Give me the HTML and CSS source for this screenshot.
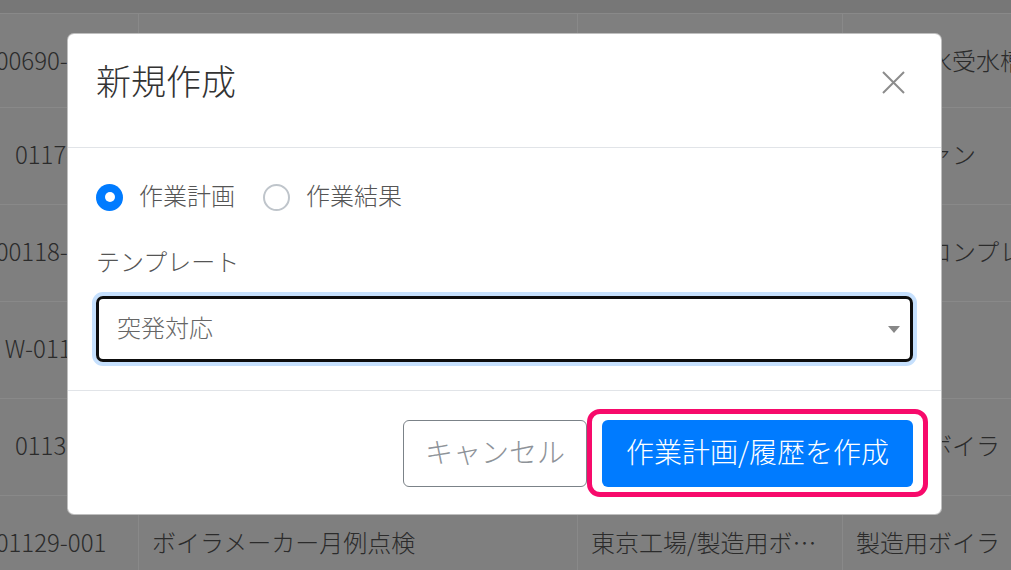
FILE: index.html
```html
<!DOCTYPE html>
<html lang="ja">
<head>
<meta charset="utf-8">
<title>新規作成</title>
<link rel="stylesheet" href="styles.css">
</head>
<body>
<div class="page">
  <div class="table">
    <div class="band"></div>
    <div class="row first">
      <div class="c id">00690-001</div>
      <div class="c">受水槽定期清掃</div>
      <div class="c">東京工場/受水槽</div>
      <div class="c">飲料用水受水槽</div>
    </div>
    <div class="row">
      <div class="c id">0117-0</div>
      <div class="c">冷却ファン点検</div>
      <div class="c">東京工場/空調設備</div>
      <div class="c">冷却ファン</div>
    </div>
    <div class="row">
      <div class="c id">00118-001</div>
      <div class="c">コンプレッサー点検</div>
      <div class="c">東京工場/空調設備</div>
      <div class="c">空調用コンプレッサー</div>
    </div>
    <div class="row">
      <div class="c id">W-01150</div>
      <div class="c">設備巡回点検</div>
      <div class="c">東京工場</div>
      <div class="c"></div>
    </div>
    <div class="row">
      <div class="c id">0113-0</div>
      <div class="c">ボイラ年次点検</div>
      <div class="c">東京工場/製造用ボイラ室</div>
      <div class="c">製造用ボイラ</div>
    </div>
    <div class="row">
      <div class="c id">01129-001</div>
      <div class="c">ボイラメーカー月例点検</div>
      <div class="c">東京工場/製造用ボイラ室</div>
      <div class="c">製造用ボイラ</div>
    </div>
  </div>

  <div class="modal" role="dialog" aria-labelledby="modal-title">
    <div class="modal-header">
      <h5 class="modal-title" id="modal-title">新規作成</h5>
      <button class="close" type="button" aria-label="閉じる">
        <svg width="23" height="23" viewBox="0 0 23 23" aria-hidden="true">
          <path d="M1 1 L22 22 M22 1 L1 22" stroke="#8c8c8c" stroke-width="2" fill="none"/>
        </svg>
      </button>
    </div>
    <div class="modal-body">
      <div class="radios">
        <label class="radio"><span class="dot checked"></span><span class="radio-label">作業計画</span></label>
        <label class="radio"><span class="dot"></span><span class="radio-label">作業結果</span></label>
      </div>
      <div class="field-label">テンプレート</div>
      <div class="select" role="combobox" aria-expanded="false">
        <span class="select-value">突発対応</span>
        <span class="caret"></span>
      </div>
    </div>
    <div class="modal-footer">
      <button class="btn btn-cancel" type="button">キャンセル</button>
      <div class="highlight">
        <button class="btn btn-primary" type="button">作業計画/履歴を作成</button>
      </div>
    </div>
  </div>
</div>
</body>
</html>
```

FILE: styles.css
```css
* {
  box-sizing: border-box;
}

html, body {
  margin: 0;
  padding: 0;
}

body {
  width: 1011px;
  height: 570px;
  overflow: hidden;
  background: #7f7f7f;
  font-family: "Noto Sans CJK JP", "Noto Sans", sans-serif;
  font-weight: 300;
}

.page {
  position: relative;
  width: 1011px;
  height: 570px;
  overflow: hidden;
}

/* background table (dimmed by backdrop) */
.table {
  display: flex;
  flex-direction: column;
  color: #2b2b2b;
  font-size: 24px;
}

.band {
  height: 13px;
  background: #777777;
}

.row {
  display: grid;
  grid-template-columns: 138px 439px 265px 1fr;
  height: 97px;
  border-top: 1px solid #898989;
}

.row.first {
  height: 94px;
}

.c {
  border-left: 1px solid #898989;
  padding: 0 13px;
  line-height: 91px;
  white-space: nowrap;
  overflow: hidden;
  text-overflow: ellipsis;
}

.c:last-child {
  text-overflow: clip;
  padding-right: 0;
}

.row.first .c {
  line-height: 92px;
}

.c.id {
  border-left: none;
  display: flex;
  justify-content: center;
  align-items: center;
  padding: 0 36px 5px 0;
  line-height: 36px;
  overflow: visible;
}

.row.first .c.id {
  line-height: 36px;
  padding-bottom: 2px;
}

/* modal */
.modal {
  position: absolute;
  left: 67px;
  top: 33px;
  width: 875px;
  background: #ffffff;
  border: 1px solid rgba(0, 0, 0, 0.25);
  border-radius: 7px;
}

.modal-header {
  display: flex;
  justify-content: space-between;
  align-items: flex-start;
  height: 114px;
  padding: 20px 28px 0;
  border-bottom: 1px solid #e1e4e8;
}

.modal-title {
  margin: 0;
  font-size: 35px;
  line-height: 52px;
  font-weight: 300;
  color: #333333;
}

.close {
  width: 40px;
  height: 52px;
  margin-top: 2px;
  padding: 0;
  border: none;
  background: transparent;
  display: flex;
  align-items: center;
  justify-content: center;
}

.modal-body {
  padding: 28px;
}

.radios {
  display: flex;
  align-items: center;
  height: 42px;
  gap: 28px;
}

.radio {
  display: flex;
  align-items: center;
  gap: 16px;
}

.dot {
  position: relative;
  width: 27px;
  height: 27px;
  border-radius: 50%;
  border: 2px solid #bfc5cb;
  background: #ffffff;
}

.dot.checked {
  border: none;
  background: #007bff;
}

.dot.checked::after {
  content: "";
  position: absolute;
  left: 8.5px;
  top: 8.5px;
  width: 10px;
  height: 10px;
  border-radius: 50%;
  background: #ffffff;
}

.radio-label {
  font-size: 24px;
  line-height: 36px;
  padding-bottom: 4px;
  color: #555555;
}

.field-label {
  margin-top: 25px;
  font-size: 24px;
  line-height: 36px;
  color: #555555;
}

.select {
  margin-top: 17px;
  height: 66px;
  display: flex;
  align-items: center;
  justify-content: space-between;
  padding: 0 10px 0 18px;
  border: 3px solid #0d0d0d;
  border-radius: 7px;
  box-shadow: 0 0 0 4px #c6e0fd;
}

.select-value {
  font-size: 24px;
  line-height: 36px;
  padding-bottom: 4px;
  color: #666666;
}

.caret {
  width: 0;
  height: 0;
  border-left: 6px solid transparent;
  border-right: 6px solid transparent;
  border-top: 7px solid #888888;
}

.modal-footer {
  display: flex;
  justify-content: flex-end;
  align-items: center;
  gap: 15px;
  padding: 29px 28px 27px;
  border-top: 1px solid #e1e4e8;
}

.btn {
  height: 67px;
  font-family: "Noto Sans CJK JP", "Noto Sans", sans-serif;
  font-weight: 300;
  font-size: 28px;
  line-height: 40px;
  border-radius: 6px;
  padding: 0 0 5px;
  cursor: pointer;
}

.btn-cancel {
  width: 184px;
  background: #ffffff;
  border: 1.5px solid #7b8288;
  color: #8e9399;
}

.highlight {
  position: relative;
}

.highlight::after {
  content: "";
  position: absolute;
  left: -15px;
  right: -15px;
  top: -11px;
  bottom: -10px;
  border: 5px solid #f70a6b;
  border-radius: 13px;
  pointer-events: none;
}

.btn-primary {
  display: block;
  width: 311px;
  background: #007bff;
  border: none;
  color: #ffffff;
}
```
